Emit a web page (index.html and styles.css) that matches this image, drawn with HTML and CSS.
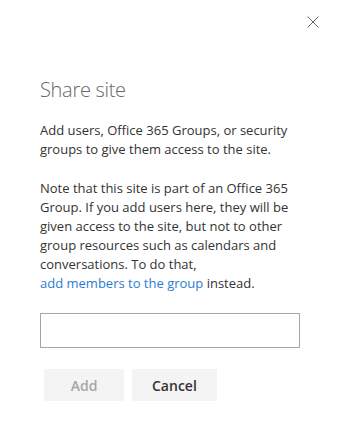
FILE: index.html
```html
<!DOCTYPE html>
<html>
<head>
<meta charset="utf-8">
<link rel="stylesheet" href="styles.css">
</head>
<body>
<div class="panel">
  <div class="close-row">
    <button class="close-btn" aria-label="Close">
      <svg width="12" height="12" viewBox="0 0 12 12">
        <path d="M0.5 0.5 L11.5 11.5 M11.5 0.5 L0.5 11.5" stroke="#666" stroke-width="1" fill="none"/>
      </svg>
    </button>
  </div>

  <div class="content">
    <h1 class="title">Share site</h1>

    <p class="text">
      Add users, Office 365 Groups, or security groups to give them access to the site.
    </p>

    <p class="text">
      Note that this site is part of an Office 365 Group. If you add users here, they will be
      given access to the site, but not to other group resources such as calendars and
      conversations. To do that,<br>
      <a class="link" href="#">add members to the group</a> instead.
    </p>

    <input class="people-input" type="text">

    <div class="actions">
      <button class="btn btn-disabled">Add</button>
      <button class="btn">Cancel</button>
    </div>
  </div>
</div>
</body>
</html>
```

FILE: styles.css
```css
body {
  margin: 0;
  background: #fff;
  font-family: "Open Sans", "Noto Sans", sans-serif;
  color: #333;
}
.panel {
  width: 340px;
}
.close-row {
  display: flex;
  justify-content: flex-end;
  padding: 16px 21px 0 0;
}
.close-btn {
  border: 0;
  background: none;
  padding: 0;
  width: 12px;
  height: 12px;
  display: flex;
}
.content {
  padding: 0 40px;
}
.title {
  font-size: 20px;
  font-weight: 300;
  letter-spacing: -0.3px;
  color: #666;
  margin: 48px 0 17px;
  line-height: 28px;
}
.text {
  font-size: 13px;
  line-height: 19px;
  margin: 0 0 20px;
}
.link {
  color: #2b7cd3;
  text-decoration: none;
}
.people-input {
  display: block;
  box-sizing: border-box;
  width: 260px;
  height: 35px;
  border: 1px solid #a6a6a6;
  margin: 0 0 21px;
  padding: 0 8px;
  font: inherit;
}
.actions {
  display: flex;
  gap: 8px;
  padding-left: 4px;
}
.btn {
  height: 32px;
  min-width: 80px;
  padding: 0 20px;
  border: 0;
  background: #f4f4f4;
  color: #333;
  font-family: inherit;
  font-size: 14px;
  font-weight: 600;
}
.btn-disabled {
  color: #a6a6a6;
}
```
